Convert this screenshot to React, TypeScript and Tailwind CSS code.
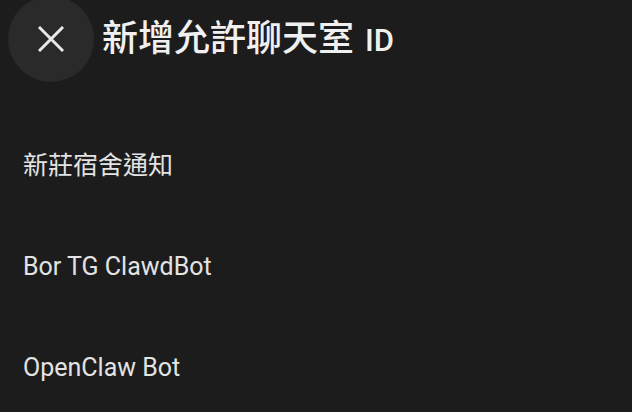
export default function App() {
  const items = ["新莊宿舍通知", "Bor TG ClawdBot", "OpenClaw Bot"];
  return (
    <div
      className="w-[632px] h-[412px] bg-[#1c1c1c] overflow-hidden text-[#e6e6e6]"
      style={{ fontFamily: 'Roboto, "Noto Sans CJK TC", sans-serif' }}
    >
      <div className="flex items-center h-[77px] pl-[8px] pt-0">
        <div className="w-[86px] h-[86px] rounded-full bg-[#2a2a2a] flex items-center justify-center shrink-0">
          <svg width="26" height="26" viewBox="0 0 26 26" fill="none">
            <path d="M2 2L24 24M24 2L2 24" stroke="#e8e8e8" strokeWidth="3" strokeLinecap="square" />
          </svg>
        </div>
        <div className="ml-[8px] font-medium text-[#f0f0f0] leading-none flex items-baseline">
          <span className="text-[36px]">新增允許聊天室</span>
          <span className="text-[31px] ml-[11px]">ID</span>
        </div>
      </div>
      <div className="flex flex-col mt-[38px]">
        {items.map((t) => (
          <div key={t} className="h-[101px] flex items-center px-[23px] text-[25px] text-[#e3e3e3]">
            {t}
          </div>
        ))}
      </div>
    </div>
  );
}
